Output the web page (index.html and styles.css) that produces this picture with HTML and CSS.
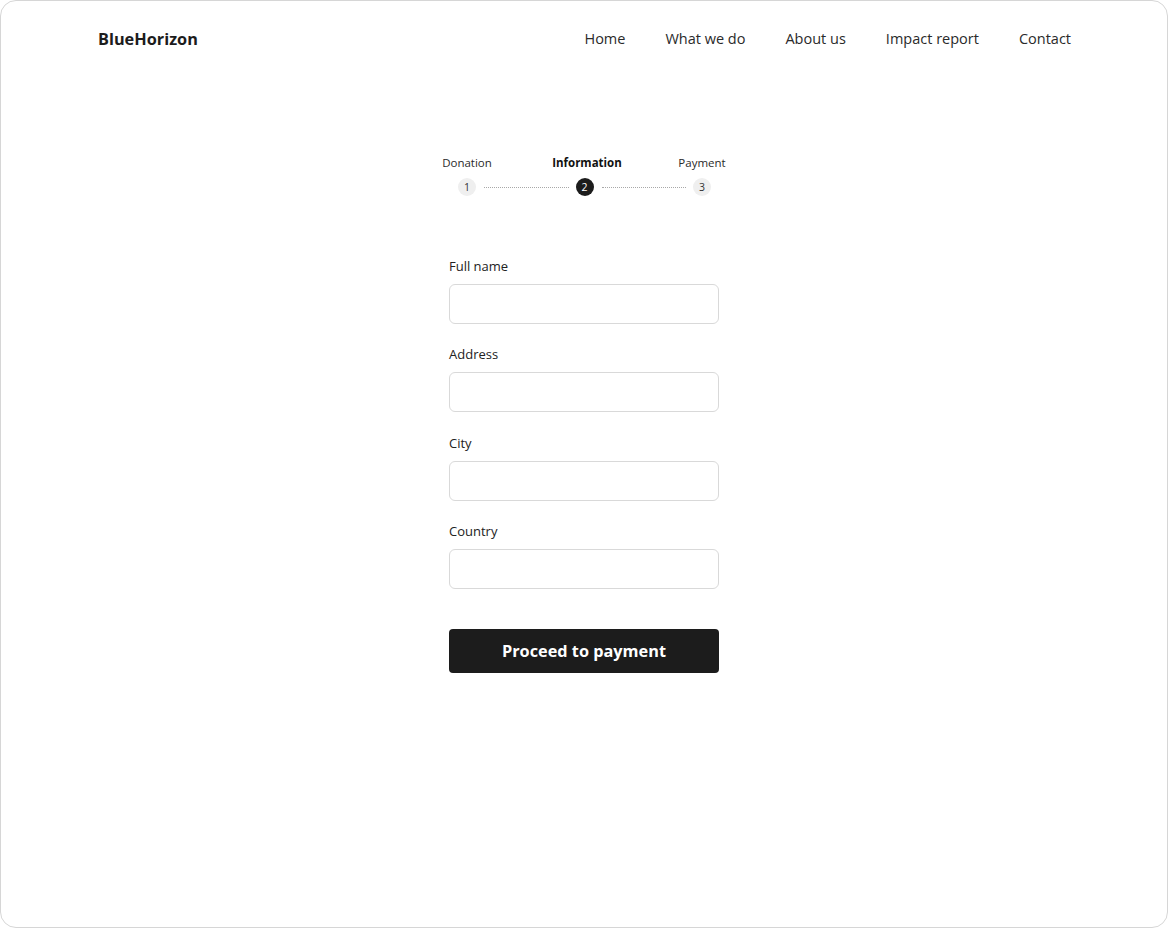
FILE: index.html
```html
<!DOCTYPE html>
<html lang="en">
<head>
    <meta charset="UTF-8">
    <meta name="viewport" content="width=device-width, initial-scale=1.0">
    <title>BlueHorizon - Donate</title>
    <link rel="stylesheet" href="styles.css">
</head>
<body>
    <div class="page">
        <header class="site-header">
            <a class="logo" href="#">BlueHorizon</a>
            <nav class="nav">
                <a href="#">Home</a>
                <a href="#">What we do</a>
                <a href="#">About us</a>
                <a href="#">Impact report</a>
                <a href="#">Contact</a>
            </nav>
        </header>

        <main class="checkout">
            <!-- Donation steps -->
            <div class="steps">
                <span class="step-label col-1">Donation</span>
                <span class="step-label col-3 current">Information</span>
                <span class="step-label col-5">Payment</span>

                <span class="step-dot">1</span>
                <span class="step-line"></span>
                <span class="step-dot active">2</span>
                <span class="step-line"></span>
                <span class="step-dot">3</span>
            </div>

            <form class="info-form">
                <div class="field">
                    <label for="fullname">Full name</label>
                    <input type="text" id="fullname">
                </div>
                <div class="field">
                    <label for="address">Address</label>
                    <input type="text" id="address">
                </div>
                <div class="field">
                    <label for="city">City</label>
                    <input type="text" id="city">
                </div>
                <div class="field">
                    <label for="country">Country</label>
                    <input type="text" id="country">
                </div>
                <button type="submit" class="btn-primary">Proceed to payment</button>
            </form>
        </main>
    </div>
</body>
</html>
```

FILE: styles.css
```css
/* Base */
body {
    margin: 0;
    font-family: "Open Sans", "Noto Sans", sans-serif;
    color: #1c1c1c;
    background-color: #fff;
}
a {
    color: inherit;
    text-decoration: none;
}

.page {
    height: 928px;
    box-sizing: border-box;
    border: 1px solid #d6d6d6;
    border-radius: 16px;
    overflow: hidden;
}

/* Header */
.site-header {
    display: flex;
    justify-content: space-between;
    align-items: center;
    padding: 28px 96px 0 97px;
    line-height: 20px;
}
.logo {
    font-size: 16.3px;
    font-weight: 700;
}
.nav {
    display: flex;
    gap: 40px;
}
.nav a {
    font-size: 14.5px;
    color: #2a2a2a;
}

/* Steps */
.checkout {
    display: flex;
    flex-direction: column;
    align-items: center;
    padding-top: 106px;
}
.steps {
    display: grid;
    grid-template-columns: 18px 1fr 18px 1fr 18px;
    grid-template-rows: 15px 18px;
    row-gap: 8px;
    width: 253px;
    margin-left: 1px;
}
.step-label {
    grid-row: 1;
    justify-self: center;
    width: max-content;
    font-size: 11.5px;
    line-height: 15px;
    color: #2a2a2a;
}
.step-label.col-1 { grid-column: 1; }
.step-label.col-3 { grid-column: 3; }
.step-label.col-5 { grid-column: 5; }
.step-label.current {
    margin-left: 5px;
    font-weight: 700;
    color: #111;
}
.step-dot {
    grid-row: 2;
    width: 18px;
    height: 18px;
    border-radius: 50%;
    background-color: #efefef;
    color: #333;
    font-size: 10.5px;
    line-height: 18px;
    text-align: center;
}
.step-dot.active {
    background-color: #1c1c1c;
    color: #fff;
}
.step-line {
    grid-row: 2;
    align-self: center;
    margin: 0 7px 0 8px;
    border-top: 1px dotted #a8a8a8;
}

/* Form */
.info-form {
    display: flex;
    flex-direction: column;
    gap: 21.3px;
    width: 270px;
    margin-top: 61px;
}
.field {
    display: flex;
    flex-direction: column;
    gap: 9px;
}
.field label {
    font-size: 13px;
    line-height: 18px;
    color: #222;
}
.field input {
    height: 40px;
    box-sizing: border-box;
    border: 1px solid #d9d9d9;
    border-radius: 6px;
    padding: 0 12px;
    font: inherit;
    font-size: 14px;
}
.btn-primary {
    margin-top: 19px;
    height: 44px;
    border: none;
    border-radius: 4px;
    background-color: #1c1c1c;
    color: #fff;
    font-family: inherit;
    font-size: 16.3px;
    font-weight: 700;
    cursor: pointer;
}
.btn-primary:hover {
    background-color: #000;
}
```
